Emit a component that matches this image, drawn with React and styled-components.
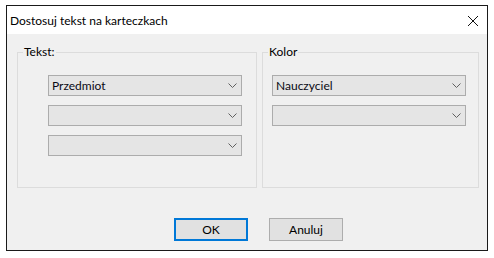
import React from 'react';
import styled, { createGlobalStyle } from 'styled-components';

const GlobalStyle = createGlobalStyle`
  html, body {
    margin: 0;
    padding: 0;
    background: #fff;
  }
  body {
    font-family: Lato, "Liberation Sans", sans-serif;
    font-size: 12px;
    color: #000;
  }
`;

const Page = styled.div`
  padding: 5px 0 0 6px;
`;

const Window = styled.div`
  width: 480px;
  height: 244px;
  border: 1px solid #1a1a1a;
  background: #f0f0f0;
  display: flex;
  flex-direction: column;
`;

const TitleBar = styled.div`
  height: 28px;
  background: #fff;
  display: flex;
  align-items: center;
  justify-content: space-between;
  padding: 0 8px 0 3px;
  box-sizing: border-box;
`;

const Title = styled.span`
  font-size: 12px;
  padding-top: 1px;
`;

const CloseButton = styled.div`
  width: 10px;
  height: 10px;
  margin-right: 1px;
  margin-top: 2px;
  display: flex;
`;

const Body = styled.div`
  flex: 1;
  display: flex;
  flex-direction: column;
  padding: 10px 8px 0 10px;
`;

const Groups = styled.div`
  display: flex;
  gap: 5px;
  height: 144px;
`;

const Group = styled.fieldset`
  margin: 0;
  padding: 0;
  width: ${(p) => p.$width}px;
  box-sizing: border-box;
  border: 1px solid #dcdcdc;
  border-radius: 0;
  min-inline-size: 0;
`;

const Legend = styled.legend`
  padding: 0 1px;
  margin-left: 5px;
  font-size: 12px;
  line-height: 16px;
`;

const Fields = styled.div`
  display: flex;
  flex-direction: column;
  gap: 9px;
  padding: 15px 0 0 ${(p) => p.$padLeft}px;
`;

const Select = styled.div`
  width: 194px;
  height: 21px;
  box-sizing: border-box;
  border: 1px solid #acacac;
  background: #e5e5e5;
  display: flex;
  align-items: center;
  justify-content: space-between;
  padding: 0 4px 0 3px;
  font-size: 12px;
  color: #0a0a14;
`;

const Chevron = styled.svg`
  flex: none;
`;

const Buttons = styled.div`
  display: flex;
  gap: 21px;
  padding-left: 157px;
  margin-top: 30px;
`;

const Button = styled.div`
  width: 74px;
  height: 23px;
  box-sizing: border-box;
  border: ${(p) => (p.$primary ? '2px solid #0078d7' : '1px solid #adadad')};
  background: #e1e1e1;
  display: flex;
  align-items: center;
  justify-content: center;
  font-size: 12px;
`;

function Dropdown({ value }) {
  return (
    <Select>
      <span>{value}</span>
      <Chevron width="9" height="5" viewBox="0 0 9 5">
        <polyline points="0.5,0.5 4.5,4.5 8.5,0.5" fill="none" stroke="#606060" strokeWidth="1" />
      </Chevron>
    </Select>
  );
}

export default function App() {
  return (
    <Page>
      <GlobalStyle />
      <Window>
        <TitleBar>
          <Title>Dostosuj tekst na karteczkach</Title>
          <CloseButton>
            <svg width="10" height="10" viewBox="0 0 10 10">
              <path d="M0 0 L10 10 M10 0 L0 10" stroke="#111" strokeWidth="1" />
            </svg>
          </CloseButton>
        </TitleBar>
        <Body>
          <Groups>
            <Group $width={240}>
              <Legend>Tekst:</Legend>
              <Fields $padLeft={30}>
                <Dropdown value="Przedmiot" />
                <Dropdown value="" />
                <Dropdown value="" />
              </Fields>
            </Group>
            <Group $width={217}>
              <Legend>Kolor</Legend>
              <Fields $padLeft={9}>
                <Dropdown value="Nauczyciel" />
                <Dropdown value="" />
              </Fields>
            </Group>
          </Groups>
          <Buttons>
            <Button $primary>OK</Button>
            <Button>Anuluj</Button>
          </Buttons>
        </Body>
      </Window>
    </Page>
  );
}
